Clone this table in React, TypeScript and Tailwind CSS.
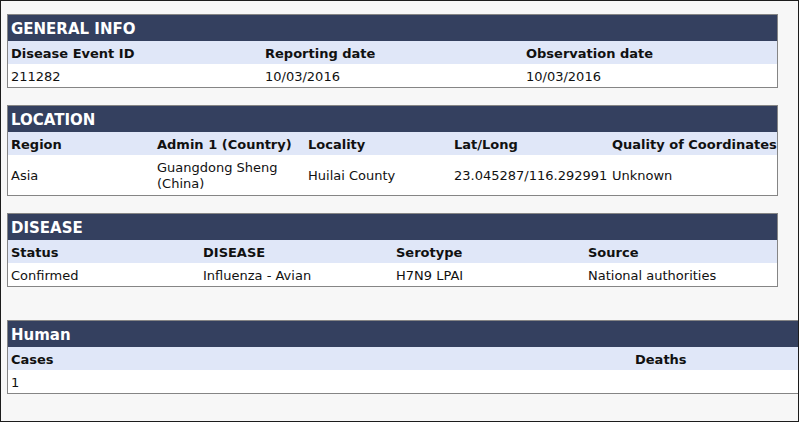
const Band = ({ title }: { title: string }) => (
  <div className="h-[26px] bg-[#34405f] text-white font-bold text-[15px] leading-none flex items-center px-[3px] pt-[2px]">
    {title}
  </div>
);

type Cell = { text: React.ReactNode; w?: string };

const Row = ({ cells, head, tall }: { cells: Cell[]; head?: boolean; tall?: boolean }) => (
  <div
    className={
      "flex text-[13px] leading-[16px] text-[#111] pt-[2px] " +
      (head ? "bg-[#e0e7f8] font-bold h-[23px]" : "bg-white") +
      (tall ? " h-[40px]" : head ? "" : " h-[23px]")
    }
  >
    {cells.map((c, i) => (
      <div key={i} className={"flex items-center px-[3px] shrink-0 whitespace-nowrap " + (c.w ?? "flex-1")}>
        {c.text}
      </div>
    ))}
  </div>
);

export default function App() {
  return (
    <div className="w-[799px] h-[422px] overflow-hidden border border-[#1c1c1c] bg-[#f7f7f7] pt-[13px] pl-[6px] font-['DejaVu_Sans','Verdana',sans-serif]">
      <div className="w-[771px] border border-[#858585]">
        <Band title="GENERAL INFO" />
        <Row
          head
          cells={[
            { text: "Disease Event ID", w: "w-[254px]" },
            { text: "Reporting date", w: "w-[261px]" },
            { text: "Observation date" },
          ]}
        />
        <Row
          cells={[
            { text: "211282", w: "w-[254px]" },
            { text: "10/03/2016", w: "w-[261px]" },
            { text: "10/03/2016" },
          ]}
        />
      </div>

      <div className="w-[771px] border border-[#858585] mt-[17px]">
        <Band title="LOCATION" />
        <Row
          head
          cells={[
            { text: "Region", w: "w-[146px]" },
            { text: "Admin 1 (Country)", w: "w-[151px]" },
            { text: "Locality", w: "w-[146px]" },
            { text: "Lat/Long", w: "w-[158px]" },
            { text: "Quality of Coordinates" },
          ]}
        />
        <Row
          tall
          cells={[
            { text: "Asia", w: "w-[146px]" },
            {
              text: (
                <span>
                  Guangdong Sheng
                  <br />
                  (China)
                </span>
              ),
              w: "w-[151px]",
            },
            { text: "Huilai County", w: "w-[146px]" },
            { text: "23.045287/116.292991", w: "w-[158px]" },
            { text: "Unknown" },
          ]}
        />
      </div>

      <div className="w-[771px] border border-[#858585] mt-[17px]">
        <Band title="DISEASE" />
        <Row
          head
          cells={[
            { text: "Status", w: "w-[192px]" },
            { text: "DISEASE", w: "w-[193px]" },
            { text: "Serotype", w: "w-[192px]" },
            { text: "Source" },
          ]}
        />
        <Row
          cells={[
            { text: "Confirmed", w: "w-[192px]" },
            { text: "Influenza - Avian", w: "w-[193px]" },
            { text: "H7N9 LPAI", w: "w-[192px]" },
            { text: "National authorities" },
          ]}
        />
      </div>

      <div className="w-[830px] border border-[#858585] mt-[33px]">
        <Band title="Human" />
        <Row
          head
          cells={[
            { text: "Cases", w: "w-[624px]" },
            { text: "Deaths" },
          ]}
        />
        <Row cells={[{ text: "1", w: "w-[624px]" }, { text: "" }]} />
      </div>
    </div>
  );
}
